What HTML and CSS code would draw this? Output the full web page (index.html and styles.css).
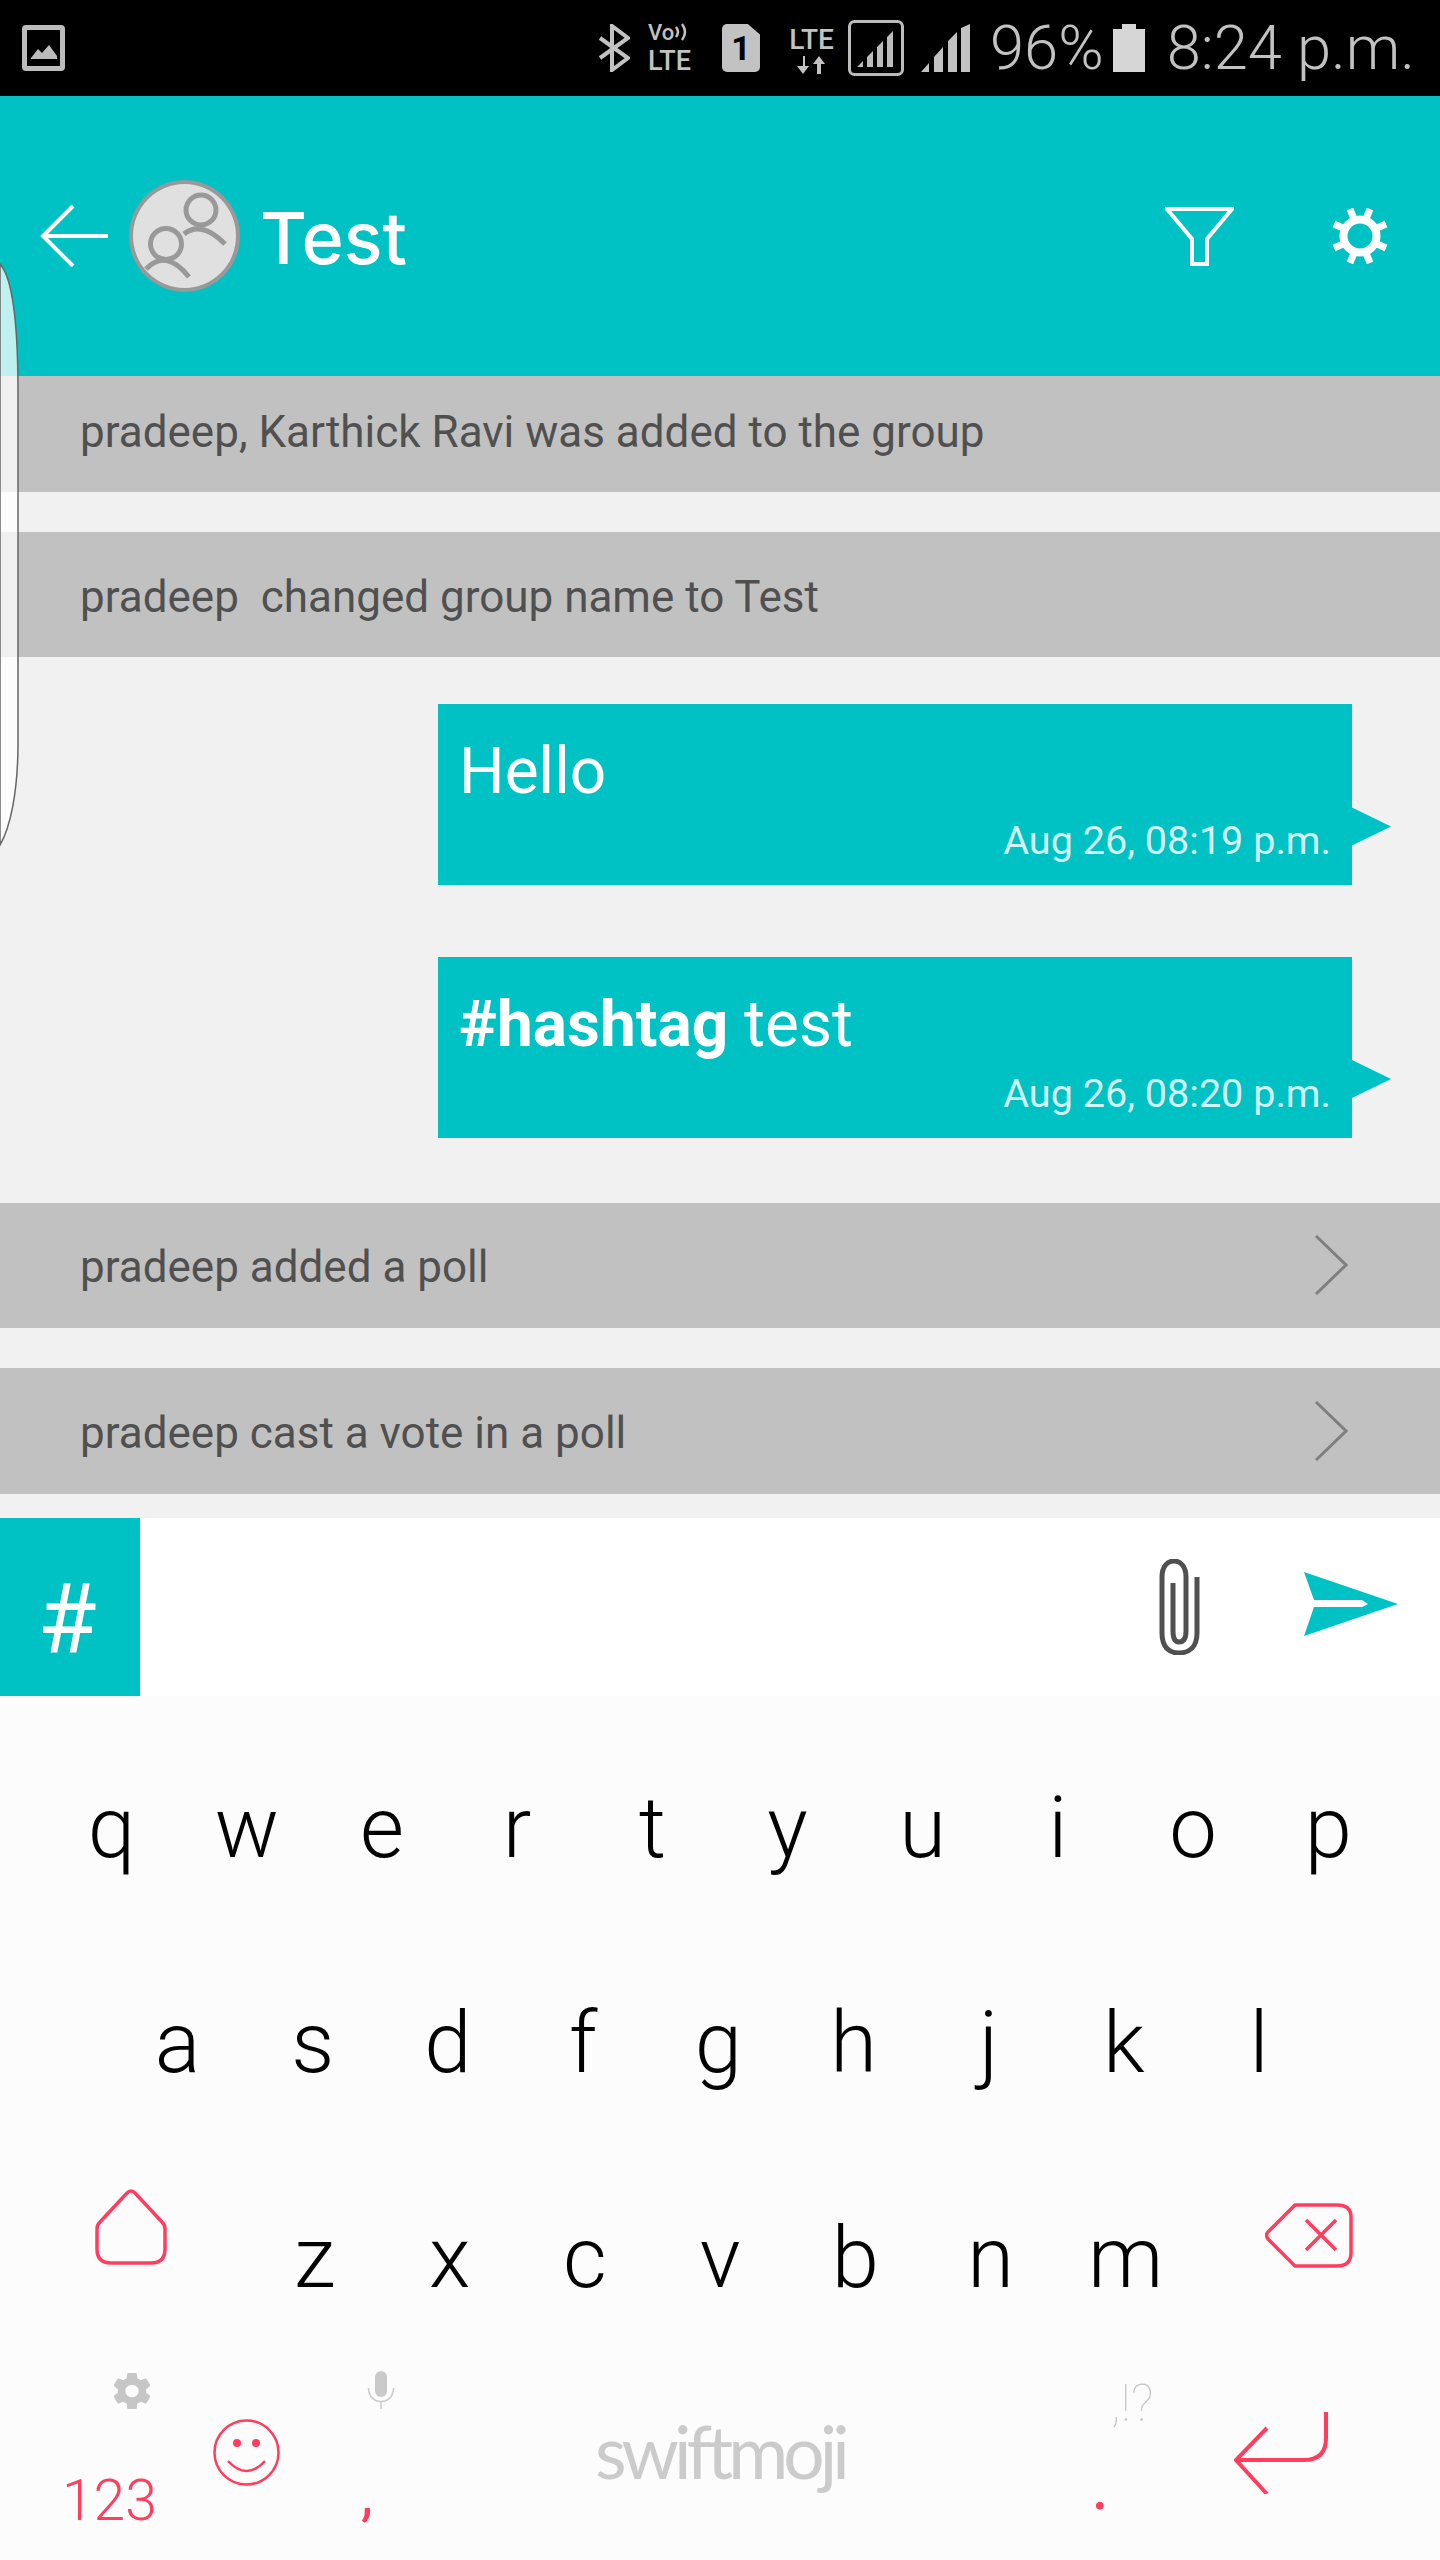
FILE: index.html
```html
<!DOCTYPE html>
<html lang="en">
<head>
  <meta charset="UTF-8" />
  <meta name="viewport" content="width=device-width, initial-scale=1" />
  <title>Test</title>
  <link rel="stylesheet" href="styles.css">
</head>
<body>
  <div class="page">
    <div class="status-bar">
      <svg class="st-gallery" width="43" height="46" viewBox="0 0 43 46"><rect width="43" height="46" rx="4" fill="#bcbcbc"/><rect x="5" y="5" width="33" height="36" fill="#000"/><path d="M9 33 L16 24 L20 28 L27 20 L35 31 V34 H9 Z" fill="#bcbcbc"/></svg>
      <div class="st-right">
        <svg class="st-bt" width="32" height="48" viewBox="0 0 32 48"><path d="M2 14 L30 34 L14 46 V2 L30 14 L2 34" fill="none" stroke="#c2c2c2" stroke-width="4"/></svg>
        <div class="st-volte">
          <div class="vo">Vo<svg width="18" height="20" viewBox="0 0 18 20"><path d="M2 5 Q6 10 2 15 M8 2 Q14 10 8 18" fill="none" stroke="#c2c2c2" stroke-width="2.5"/></svg></div>
          <div class="volte-lte">LTE</div>
        </div>
        <div class="st-sim">1</div>
        <div class="st-lte">
          <div class="lte">LTE</div>
          <svg width="30" height="18" viewBox="0 0 30 18"><path d="M7 0 V10 H1 L7 18 L13 10 H9 V0 Z M21 18 V8 H17 L23 0 L29 8 H25 V18 Z" fill="#c2c2c2"/></svg>
        </div>
        <svg class="st-box" width="56" height="56" viewBox="0 0 56 56"><rect x="1.5" y="1.5" width="53" height="53" rx="5" fill="none" stroke="#bcbcbc" stroke-width="3"/><path d="M9 47 L15 41 V47 Z M19 47 V37 L25 31 V47 Z M29 47 V27 L35 21 V47 Z M39 47 V17 L45 11 V47 Z" fill="#bcbcbc"/></svg>
        <svg class="st-signal" width="49" height="48" viewBox="0 0 49 48"><path d="M0 48 L8 39 V48 Z M13 48 V33 L22 23 V48 Z M27 48 V17 L36 8 V48 Z M40 48 V4 L49 0 V48 Z" fill="#c2c2c2"/></svg>
        <div class="st-pct">96%</div>
        <svg class="st-batt" width="32" height="48" viewBox="0 0 32 48"><path d="M0 5 H9 V0 H23 V5 H32 V48 H0 Z" fill="#d6d6d6"/></svg>
        <div class="st-time">8:24 p.m.</div>
      </div>
    </div>

    <header class="app-bar">
      <svg class="back" width="68" height="62" viewBox="0 0 68 62"><path d="M68 31 H3 M33 1 L3 31 L33 61" fill="none" stroke="#fff" stroke-width="4"/></svg>
      <div class="avatar">
        <svg width="103" height="104" viewBox="0 0 103 104"><g fill="none" stroke="#999" stroke-width="5"><circle cx="68" cy="26" r="15"/><path d="M51 50 Q68 36 92 60"/><circle cx="33" cy="60" r="15.5"/><path d="M13 85 Q33 64 56 93"/></g></svg>
      </div>
      <div class="title">Test</div>
      <svg class="filter" width="69" height="60" viewBox="0 0 69 60"><path d="M2 3 H67 L42 33 V58 H27 V33 Z" fill="none" stroke="#fff" stroke-width="4"/></svg>
      <svg class="settings" width="58" height="58" viewBox="0 0 58 58"><circle cx="29" cy="29" r="16.5" fill="none" stroke="#fff" stroke-width="8"/><path d="M23 12 L19 2 M35 12 L39 2 M23 46 L19 56 M35 46 L39 56 M13 21.5 L3 17 M45 21.5 L55 17 M13 36.5 L3 41 M45 36.5 L55 41" stroke="#fff" stroke-width="7"/></svg>
    </header>

    <main class="chat">
      <div class="notice notice-first">pradeep, Karthick Ravi was added to the group</div>
      <div class="notice notice-rename">pradeep&nbsp; changed group name to Test</div>

      <div class="bubble">
        <div class="msg">Hello</div>
        <div class="time">Aug 26, 08:19 p.m.</div>
      </div>
      <div class="bubble">
        <div class="msg"><b>#hashtag</b> test</div>
        <div class="time">Aug 26, 08:20 p.m.</div>
      </div>

      <div class="notice notice-poll">
        <span>pradeep added a poll</span>
        <svg class="chevron" width="34" height="60" viewBox="0 0 34 60"><path d="M2 1 L32 30 L2 59" fill="none" stroke="#808080" stroke-width="3"/></svg>
      </div>
      <div class="notice">
        <span>pradeep cast a vote in a poll</span>
        <svg class="chevron" width="34" height="60" viewBox="0 0 34 60"><path d="M2 1 L32 30 L2 59" fill="none" stroke="#808080" stroke-width="3"/></svg>
      </div>
    </main>

    <div class="composer">
      <div class="hash">#</div>
      <svg class="clip" width="42" height="96" viewBox="0 0 42 96"><path d="M38 18 V74 C38 88 30 94 20 94 C10 94 3 88 3 74 V18 C3 8 8 2 15 2 C22 2 27 8 27 18 V72 C27 80 24 83 20 83 C16 83 14 80 14 72 V24" fill="none" stroke="#505050" stroke-width="5"/></svg>
      <svg class="send" width="94" height="64" viewBox="0 0 94 64"><path d="M0 0 L94 32 L0 64 L10 35 H58 L64 32 L58 28 H10 Z" fill="#00c1c3"/></svg>
    </div>

    <div class="keyboard">
      <div class="kb-row kb-row1">
        <span class="key">q</span><span class="key">w</span><span class="key">e</span><span class="key">r</span><span class="key">t</span><span class="key">y</span><span class="key">u</span><span class="key">i</span><span class="key">o</span><span class="key">p</span>
      </div>
      <div class="kb-row kb-row2">
        <span class="key">a</span><span class="key">s</span><span class="key">d</span><span class="key">f</span><span class="key">g</span><span class="key">h</span><span class="key">j</span><span class="key">k</span><span class="key">l</span>
      </div>
      <div class="kb-row kb-row3">
        <div class="shift-cell">
          <svg width="72" height="76" viewBox="0 0 72 76"><path d="M32 4 Q36 0 40 4 L67 33 Q70 36 70 40 V60 Q70 74 56 74 H16 Q2 74 2 60 V40 Q2 36 5 33 Z" fill="none" stroke="#ff3d5f" stroke-width="3.5"/></svg>
        </div>
        <span class="key">z</span><span class="key">x</span><span class="key">c</span><span class="key">v</span><span class="key">b</span><span class="key">n</span><span class="key">m</span>
        <svg class="backspace" width="88" height="65" viewBox="0 0 88 65"><path d="M30 2 H72 Q86 2 86 14 V50 Q86 63 72 63 H30 L3 36 Q0 32 3 29 Z M41 17 L71 47 M71 17 L41 47" fill="none" stroke="#ff3d5f" stroke-width="3.5"/></svg>
      </div>
      <div class="kb-bottom">
        <div class="kb-col-a">
          <svg class="small-gear" width="36" height="36" viewBox="2.5 2 19 20" preserveAspectRatio="none"><path fill="#c6c6c6" d="M19.43 12.98c.04-.32.07-.64.07-.98s-.03-.66-.07-.98l2.11-1.65c.19-.15.24-.42.12-.64l-2-3.46c-.12-.22-.39-.3-.61-.22l-2.49 1c-.52-.4-1.08-.73-1.69-.98l-.38-2.65C14.46 2.18 14.25 2 14 2h-4c-.25 0-.46.18-.49.42l-.38 2.65c-.61.25-1.17.59-1.69.98l-2.49-1c-.23-.09-.49 0-.61.22l-2 3.46c-.13.22-.07.49.12.64l2.11 1.65c-.04.32-.07.65-.07.98s.03.66.07.98l-2.11 1.65c-.19.15-.24.42-.12.64l2 3.46c.12.22.39.3.61.22l2.49-1c.52.4 1.08.73 1.69.98l.38 2.65c.03.24.24.42.49.42h4c.25 0 .46-.18.49-.42l.38-2.65c.61-.25 1.17-.59 1.69-.98l2.49 1c.23.09.49 0 .61-.22l2-3.46c.12-.22.07-.49-.12-.64l-2.11-1.65zM12 15.5c-1.93 0-3.5-1.57-3.5-3.5s1.57-3.5 3.5-3.5 3.5 1.57 3.5 3.5-1.57 3.5-3.5 3.5z"/></svg>
          <div class="num-key">123</div>
        </div>
        <svg class="smiley" width="67" height="67" viewBox="0 0 67 67"><circle cx="33.5" cy="33.5" r="32" fill="none" stroke="#ff3d5f" stroke-width="2.5"/><circle cx="24" cy="24" r="4" fill="#ff3d5f"/><circle cx="43" cy="24" r="4" fill="#ff3d5f"/><path d="M15 42 Q33.5 62 52 42" fill="none" stroke="#ff3d5f" stroke-width="2.5"/></svg>
        <div class="kb-col-b">
          <svg class="mic" width="28" height="38" viewBox="0 0 28 38"><rect x="8" y="0" width="12" height="26" rx="6" fill="#cacaca"/><path d="M1.5 17 C1.5 35 26.5 35 26.5 17 M14 30 V38" fill="none" stroke="#cacaca" stroke-width="1.5"/></svg>
          <div class="comma-key">,</div>
        </div>
        <div class="logo">swiftmoji</div>
        <div class="kb-col-c">
          <div class="punct">,!?</div>
          <div class="dot-key">.</div>
        </div>
        <svg class="enter" width="94" height="82" viewBox="0 0 94 82"><path d="M92 0 V26 Q92 48 70 48 H2 M33 16 L2 48 L33 82" fill="none" stroke="#ff3d5f" stroke-width="4"/></svg>
      </div>
    </div>

    <svg class="drawer-edge" width="20" height="584" viewBox="0 0 20 584"><path d="M0 1 C12 14 18 60 18 130 V480 C18 530 10 565 0 582 Z" fill="rgba(255,255,255,0.75)" stroke="#666" stroke-width="1.5"/></svg>
  </div>
</body>
</html>
```

FILE: styles.css
```css
body {
  margin: 0;
  background: #f1f1f1;
  font-family: Roboto, 'Liberation Sans', sans-serif;
}

.page {
  position: relative;
  width: 1440px;
  height: 2560px;
  overflow: hidden;
  background: #f1f1f1;
}

.status-bar {
  height: 96px;
  background: #000;
  color: #c2c2c2;
  display: flex;
  align-items: center;
  padding: 0 25px 0 22px;
}
.st-right {
  margin-left: auto;
  display: flex;
  align-items: center;
}
.st-volte { margin-left: 18px; width: 48px; font-weight: 500; }
.vo {
  display: flex;
  align-items: center;
  font-size: 22px;
}
.volte-lte {
  font-size: 27px;
}
.lte {
  font-size: 28px;
  font-weight: 500;
}
.st-sim {
  margin-left: 26px;
  width: 38px;
  height: 48px;
  background: #c2c2c2;
  color: #000;
  font-size: 34px;
  font-weight: 700;
  line-height: 48px;
  text-align: center;
  border-radius: 5px;
  clip-path: polygon(0 0, 68% 0, 100% 22%, 100% 100%, 0 100%);
}
.st-lte {
  margin-left: 25px;
  width: 53px;
  display: flex;
  flex-direction: column;
  align-items: center;
}
.st-box { margin-left: 10px; }
.st-signal { margin-left: 17px; }
.st-pct, .st-time {
  font-size: 61.5px;
  font-weight: 300;
  line-height: 60px;
}
.st-pct { margin-left: 20px; }
.st-batt { margin-left: 9px; }
.st-time { margin-left: 22px; }

.app-bar {
  height: 280px;
  background: #00c1c3;
  display: flex;
  align-items: center;
  padding: 0 51px 0 40px;
}
.avatar {
  margin-left: 21px;
  width: 103px;
  height: 104px;
  border: 4px solid #999;
  border-radius: 50%;
  background: #e0e0e0;
  overflow: hidden;
}
.avatar svg { display: block; }
.title {
  margin-left: 20px;
  padding-top: 2px;
  color: #fff;
  font-family: Inter, Roboto, sans-serif;
  font-size: 72px;
  font-weight: 500;
}
.filter { margin-left: auto; }
.settings { margin-left: 97px; }

.chat {
  display: flex;
  flex-direction: column;
  height: 1118px;
}
.notice {
  box-sizing: border-box;
  height: 126px;
  background: #c1c1c1;
  color: #505050;
  font-size: 44px;
  display: flex;
  align-items: center;
  justify-content: space-between;
  padding: 3px 92px 0 80px;
  margin-top: 40px;
}
.notice-first { height: 116px; margin-top: 0; padding-top: 0; padding-bottom: 3px; }
.notice-rename { padding-top: 4px; }
.notice-poll { margin-top: 65px; }
.chevron { margin-top: -3px; }

.bubble {
  position: relative;
  box-sizing: border-box;
  width: 914px;
  height: 181px;
  margin: 47px 0 0 438px;
  padding: 30px 21px 0;
  background: #00c1c3;
  color: #fff;
}
.bubble + .bubble { margin-top: 72px; }
.bubble::after {
  content: "";
  position: absolute;
  left: 100%;
  top: 103px;
  width: 39px;
  height: 38px;
  background: #00c1c3;
  clip-path: polygon(0 0, 100% 50%, 0 100%);
}
.msg { font-size: 64px; line-height: 76px; }
.time {
  margin-top: 7px;
  text-align: right;
  color: #d2f5f5;
  font-size: 39.6px;
  line-height: 48px;
}

.composer {
  margin-top: 24px;
  height: 178px;
  background: #fff;
  display: flex;
  align-items: center;
}
.hash {
  box-sizing: border-box;
  width: 140px;
  height: 178px;
  padding-right: 6px;
  background: #00c1c3;
  color: #fff;
  font-size: 96px;
  line-height: 202px;
  text-align: center;
}
.clip { margin-left: auto; }
.send { margin: -6px 42px 0 103px; }

.keyboard {
  height: 864px;
  box-sizing: border-box;
  padding-top: 25px;
  background: #fcfcfc;
}
.kb-row {
  display: flex;
  height: 215px;
}
.kb-row1 { padding-left: 44px; }
.kb-row2 { padding-left: 110px; }
.key {
  width: 135.2px;
  text-align: center;
  color: #000;
  font-size: 85px;
  font-weight: 300;
  line-height: 215px;
}
.shift-cell {
  width: 152px;
  padding: 38px 0 0 95px;
}
.backspace { margin: 52px 0 0 72px; }

.kb-bottom {
  display: grid;
  grid-template-columns: 213px 151px 231px 495px 144px 1fr;
  align-items: start;
}
.kb-col-a { padding: 7px 0 0 62px; }
.small-gear { display: block; margin-left: 52px; }
.num-key {
  margin-top: 62px;
  color: #ff3d5f;
  font-size: 57px;
  font-weight: 300;
  line-height: 60px;
}
.smiley { margin-top: 53px; }
.kb-col-b { padding-top: 5px; }
.mic { display: block; margin-left: 3px; }
.comma-key {
  margin: 55px 0 0 -3px;
  color: #ff3d5f;
  font-size: 60px;
  line-height: 60px;
}
.logo {
  margin-top: 45px;
  color: #cbcbcb;
  font-family: Lato, sans-serif;
  font-size: 73px;
  line-height: 80px;
  letter-spacing: -5px;
}
.kb-col-c { padding-top: 13px; }
.punct {
  margin-left: 21px;
  color: #c6c6c6;
  font-size: 52px;
  font-weight: 100;
  line-height: 50px;
}
.dot-key {
  margin: 26px 0 0 1px;
  color: #ff3d5f;
  font-size: 70px;
  line-height: 60px;
}
.enter { margin-top: 46px; }

.drawer-edge {
  position: absolute;
  left: 0;
  top: 263px;
}
```
